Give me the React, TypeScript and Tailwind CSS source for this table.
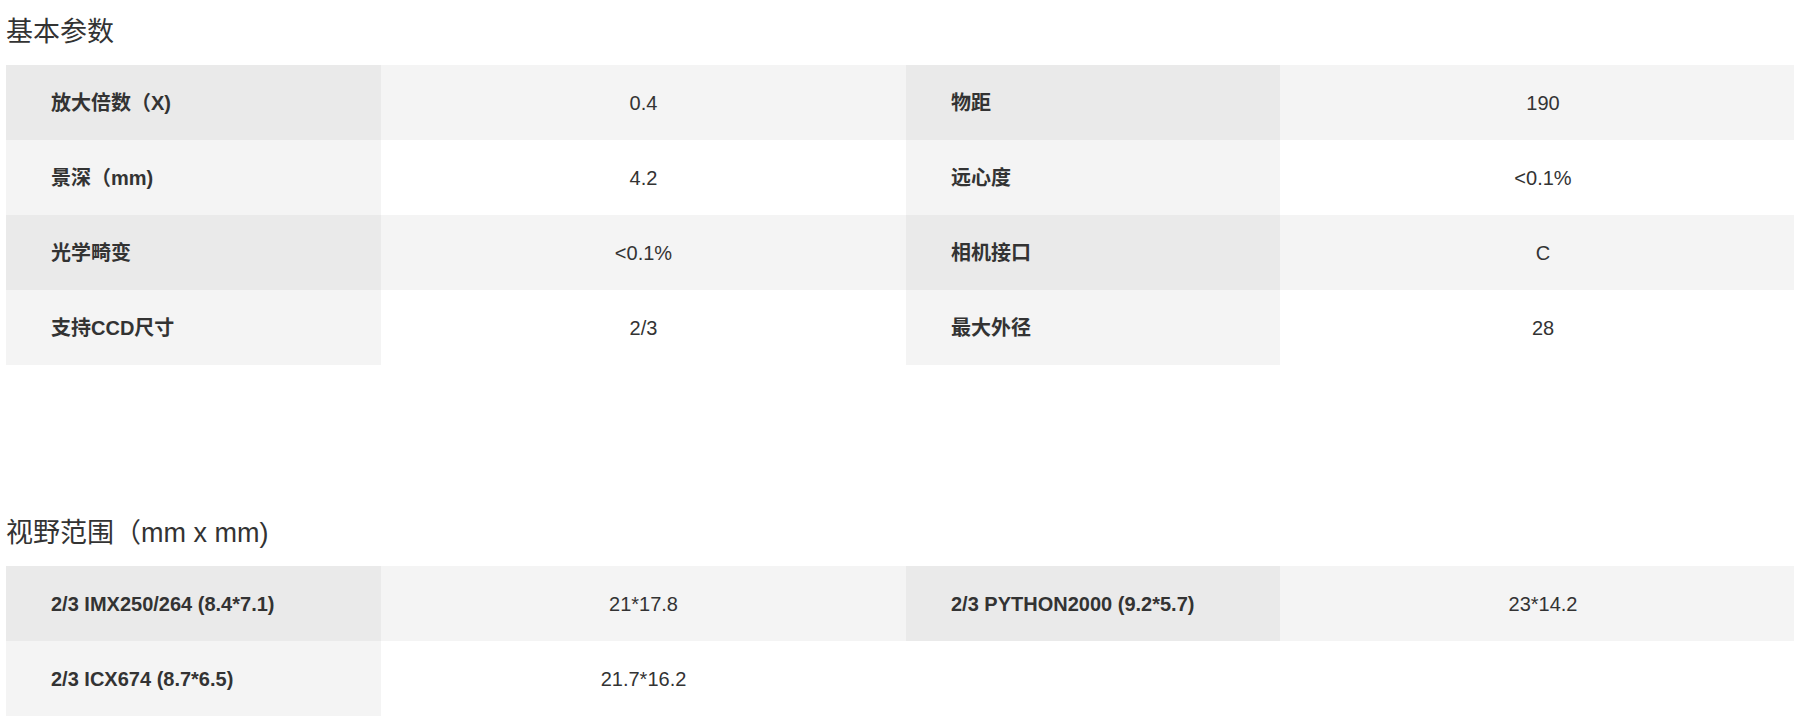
import React from 'react';

type Cell = [string, string];

const basic: Cell[][] = [
  [['放大倍数（X)', '0.4'], ['物距', '190']],
  [['景深（mm)', '4.2'], ['远心度', '<0.1%']],
  [['光学畸变', '<0.1%'], ['相机接口', 'C']],
  [['支持CCD尺寸', '2/3'], ['最大外径', '28']],
];

const fov: Cell[][] = [
  [['2/3 IMX250/264 (8.4*7.1)', '21*17.8'], ['2/3 PYTHON2000 (9.2*5.7)', '23*14.2']],
  [['2/3 ICX674 (8.7*6.5)', '21.7*16.2']],
];

function SpecTable({ rows }: { rows: Cell[][] }) {
  return (
    <div className="grid grid-cols-[375px_525px_374px_526px]">
      {rows.map((row, i) => {
        const odd = i % 2 === 0;
        return row.map(([label, value], j) => (
          <React.Fragment key={`${i}-${j}`}>
            <div
              className={`h-[75px] flex items-center pl-[45px] text-[20px] font-bold text-[#333] ${
                odd ? 'bg-[#eaeaea]' : 'bg-[#f4f4f4]'
              }`}
            >
              {label}
            </div>
            <div
              className={`h-[75px] flex items-center justify-center text-[20px] text-[#333] ${
                odd ? 'bg-[#f4f4f4]' : 'bg-white'
              }`}
            >
              {value}
            </div>
          </React.Fragment>
        ));
      })}
    </div>
  );
}

export default function App() {
  return (
    <div
      className="w-[1794px] h-[721px] overflow-hidden bg-white pl-[6px]"
      style={{ fontFamily: '"Liberation Sans", "Noto Sans CJK SC", sans-serif' }}
    >
      {/* 基本参数 */}
      <section>
        <h2 className="h-[65px] flex items-center text-[27px] font-normal text-[#333]">基本参数</h2>
        <SpecTable rows={basic} />
      </section>

      {/* 视野范围 */}
      <section className="mt-[136px]">
        <h2 className="h-[65px] flex items-center text-[27px] font-normal text-[#333]">视野范围（mm x mm)</h2>
        <SpecTable rows={fov} />
      </section>
    </div>
  );
}
